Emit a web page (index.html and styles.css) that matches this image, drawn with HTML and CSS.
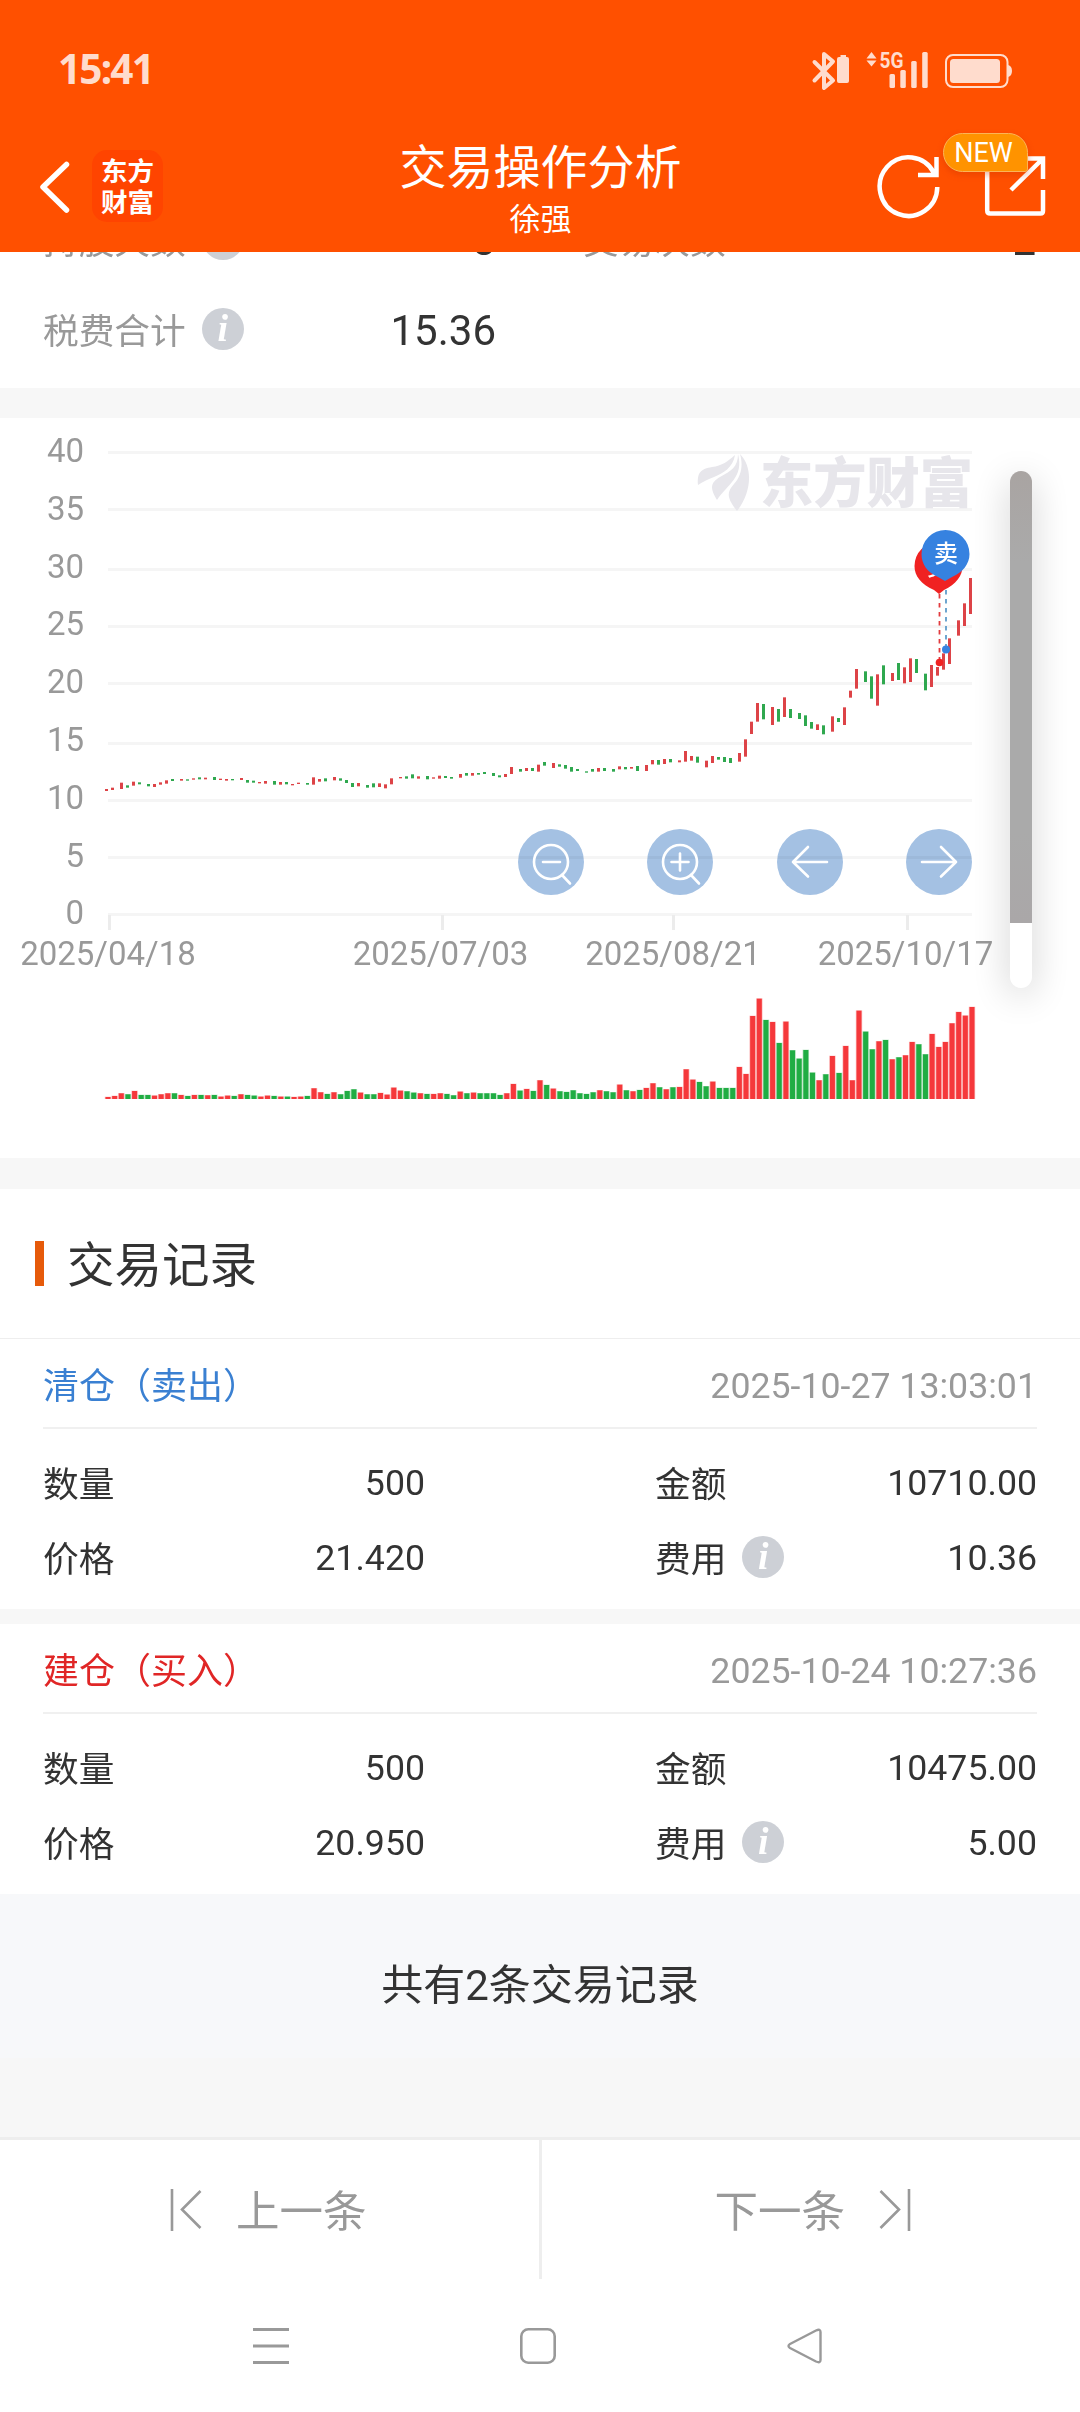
FILE: index.html
```html
<!DOCTYPE html>
<html lang="zh-CN">
<head>
<meta charset="utf-8">
<title>交易操作分析</title>
<link rel="stylesheet" href="styles.css">
</head>
<body>
<header class="top">
  <div class="status">
    <span class="clock">15:41</span>
    <svg class="status-icons" width="204" height="44" viewBox="810 48 204 44">
      <g fill="none" stroke="#ffdccd" stroke-width="4" stroke-linejoin="round" stroke-linecap="round">
        <path d="M814.5 62 833 80.500 824 88V54l9 7.500L814.500 80.500"/>
      </g>
      <g fill="#ffdccd">
        <path d="M840.500 57v-2h5.500v2h1a2 2 0 0 1 2 2v22a2 2 0 0 1-2 2h-8a2 2 0 0 1-2-2V59a2 2 0 0 1 2-2z"/>
        <path d="M866.500 58.500l5-6.500 5 6.500zM866.500 60.500h10l-5 6z"/>
        <text class="net" x="879.500" y="67.500" textLength="24" lengthAdjust="spacingAndGlyphs">5G</text>
        <rect x="889.500" y="74" width="5.500" height="14" rx="1.500"/>
        <rect x="900.300" y="70" width="5.500" height="18" rx="1.500"/>
        <rect x="911.200" y="61" width="5.500" height="27" rx="1.500"/>
        <rect x="922.200" y="52" width="5.500" height="36" rx="1.500"/>
        <rect x="950" y="59" width="50" height="24" rx="3.500"/>
        <path d="M1008 65q4 1 4 6t-4 6z"/>
      </g>
      <rect x="946" y="55" width="61.500" height="32" rx="7" fill="none" stroke="#ffdccd" stroke-width="2"/>
    </svg>
  </div>
  <div class="titlebar">
    <div class="left">
      <svg width="34" height="56" viewBox="38 159 34 56" fill="none" stroke="#fff" stroke-width="5.500" stroke-linecap="round" stroke-linejoin="round"><path d="M66.500 164.500 43 187l23.500 23"/></svg>
      <div class="brand"><span>东方</span><span>财富</span></div>
    </div>
    <div class="title"><h1>交易操作分析</h1><p>徐强</p></div>
    <div class="actions">
      <svg width="172" height="72" viewBox="876 148 172 72" fill="none" stroke="#fff" stroke-width="4.500">
        <path d="M937.300 187A28.800 29.300 0 1 1 934 173M936.500 157v18H918"/>
        <path d="M987.200 166v44.500q0 3 3 3h50.300q2.500 0 2.500-2.500v-21M1043 179v-20.500h-18M1042.500 159 1011 190"/>
      </svg>
      <span class="badge">NEW</span>
    </div>
  </div>
</header>

<main>
  <section class="summary">
    <div class="pair"><span class="name">持股天数</span><i class="info">i</i><b>3</b></div>
    <div class="pair"><span class="name">交易次数</span><b>2</b></div>
    <div class="pair"><span class="name">税费合计</span><i class="info">i</i><b>15.36</b></div>
  </section>

  <section class="chart">
    <svg width="1080" height="740" viewBox="0 418 1080 740">
      <g id="grid"></g>
      <g class="watermark">
        <path d="M698 485C697 472 701 469 712 467C722 466 728 461 735 455C733 468 723 473 714 477C707 480 702 482 698 485Z"/>
        <path d="M738 454C744 477 728 484 717 500C710 488 710 483 720 477C731 471 738 467 738 454Z"/>
        <path d="M740 454C753 467 752 492 737 511C726 497 727 492 734 484C742 475 743 464 740 454Z"/>
        <text x="760" y="502.500" textLength="213" lengthAdjust="spacingAndGlyphs">东方财富</text>
      </g>
      <g id="candles"></g>
      <g id="volume"></g>
      <g stroke-width="1.800" stroke-dasharray="4.500 4.500">
        <path d="M939.500 594v66" stroke="#e23b3e"/>
        <path d="M946 590v56" stroke="#5f9dcb"/>
      </g>
      <circle cx="939.500" cy="662.500" r="3.800" fill="#f02222"/>
      <circle cx="946" cy="649.500" r="4" fill="#3682e0"/>
      <path fill="#f02222" d="M939 594 934 590C921 584 914.500 576 914.500 566A24 24 0 0 1 962.500 566C962.500 576 956 584 944 590Z"/>
      <text class="mark" x="939" y="575">买</text>
      <path fill="#3682e0" d="M945 581 938 577C927 572 921.500 564 921.500 554A24 24 0 0 1 969.500 554C969.500 564 963 572 952 577Z"/>
      <text class="mark" x="946" y="562">卖</text>
      <g fill="#a4c1e3" style="mix-blend-mode:multiply">
        <circle cx="551" cy="862" r="33"/><circle cx="680" cy="862" r="33"/>
        <circle cx="810" cy="862" r="33"/><circle cx="939" cy="862" r="33"/>
      </g>
      <g fill="none" stroke="#fff" stroke-width="2.600" stroke-linecap="round" stroke-linejoin="round">
        <circle cx="551" cy="862" r="17"/><path d="M562 875l8 8.500M543 862h17"/>
        <circle cx="680" cy="862" r="17"/><path d="M691 875l8 8.500M671.500 862h17M680 853.500v17"/>
        <path d="M827 862h-34M808 847l-15 15 15 14.500"/>
        <path d="M922 862h34M941 847l15 15-15 14.500"/>
      </g>
    </svg>
    <div class="scroller"><div class="scroller-fill"></div></div>
  </section>

  <section class="records">
    <h2><span>交易记录</span></h2>
    <article class="record">
      <div class="head sell"><span>清仓（卖出）</span><time>2025-10-27 13:03:01</time></div>
      <div class="grid">
        <div class="cell"><span>数量</span><b>500</b></div><div class="cell"><span>金额</span><b>10710.00</b></div>
        <div class="cell"><span>价格</span><b>21.420</b></div><div class="cell"><span>费用</span><i class="info">i</i><b>10.36</b></div>
      </div>
    </article>
    <article class="record">
      <div class="head buy"><span>建仓（买入）</span><time>2025-10-24 10:27:36</time></div>
      <div class="grid">
        <div class="cell"><span>数量</span><b>500</b></div><div class="cell"><span>金额</span><b>10475.00</b></div>
        <div class="cell"><span>价格</span><b>20.950</b></div><div class="cell"><span>费用</span><i class="info">i</i><b>5.00</b></div>
      </div>
    </article>
  </section>
  <p class="total">共有2条交易记录</p>
</main>

<nav class="pager">
  <div class="prev">
    <svg width="34" height="46" viewBox="0 0 34 46" fill="none" stroke="#999" stroke-width="2.600"><path d="M3 2v42M31.500 4 13 22.500 31.500 41"/></svg>
    <span>上一条</span>
  </div>
  <div class="next">
    <span>下一条</span>
    <svg width="34" height="46" viewBox="0 0 34 46" fill="none" stroke="#999" stroke-width="2.600"><path d="M31 2v42M2.500 4 21 22.500 2.500 41"/></svg>
  </div>
</nav>
<footer class="sysnav">
  <svg width="36" height="40" viewBox="0 0 36 40" stroke="#999" stroke-width="2.800"><path d="M0 3.500h36M0 20h36M0 36.500h36"/></svg>
  <svg width="36" height="40" viewBox="0 0 36 40" fill="none" stroke="#999" stroke-width="2.600"><rect x="1.300" y="3.300" width="33.400" height="33.400" rx="7"/></svg>
  <svg width="36" height="40" viewBox="0 0 36 40" fill="none" stroke="#999" stroke-width="2.400" stroke-linejoin="round"><path d="M3 18 29 4.500Q33.500 2.500 33.500 6V34Q33.500 37.500 29 35.500L3 22Q0 20 3 18Z"/></svg>
</footer>
<script src="chart.js"></script>
</body>
</html>
```
FILE: styles.css
```css
* { box-sizing: border-box; }
body {
  margin: 0;
  width: 1080px;
  height: 2412px;
  overflow: hidden;
  background: #fff;
  color: #333;
  font-family: Roboto, "Noto Sans CJK SC", sans-serif;
  display: flex;
  flex-direction: column;
}
h1, h2, p { margin: 0; font-weight: 400; }
b { font-weight: 400; }
svg { display: block; flex: none; }

.top { height: 252px; flex: none; background: #ff5000; color: #fff; z-index: 1; }
.status {
  height: 140px;
  padding: 0 66px 0 58px;
  display: flex;
  align-items: center;
  justify-content: space-between;
}
.clock { font: 700 40.500px/44px "Noto Sans", Roboto, sans-serif; color: #ffdccd; letter-spacing: -1.8px; padding-bottom: 3px; }
.net { font: 700 22px Roboto, sans-serif; }
.titlebar {
  height: 112px;
  padding: 0 32px 0 38px;
  display: grid;
  grid-template-columns: 1fr auto 1fr;
}
.left { display: flex; align-items: flex-start; gap: 20px; padding-top: 10px; }
.left svg { margin-top: 9px; }
.brand {
  width: 71px;
  height: 72px;
  border-radius: 15px;
  background: #ff4400;
  display: flex;
  flex-direction: column;
  align-items: center;
  padding-top: 5px;
  font: 700 26.500px/30.500px "Noto Sans CJK SC", sans-serif;
}
.title { text-align: center; width: 300px; margin-left: -5px; }
.title h1 { font-size: 47px; line-height: 56px; white-space: nowrap; }
.title p { font-size: 31px; line-height: 36px; margin-top: 6px; }
.actions { position: relative; justify-self: end; padding-top: 8px; }
.badge {
  position: absolute;
  left: 67px;
  top: -7px;
  width: 85px;
  height: 39px;
  border: 1.500px solid #fbb457;
  border-radius: 20px 20px 3px 20px;
  background: #ff9300;
  box-shadow: 0 3px 6px rgba(200, 50, 0, .35);
  text-align: center;
  font-size: 27px;
  line-height: 38px;
  padding-right: 4px;
}

main { flex: 1; min-height: 0; background: #f7f7f7; display: flex; flex-direction: column; }
.summary {
  height: 136px;
  flex: none;
  overflow: hidden;
  background: #fff;
  padding: 0 43px;
  display: grid;
  grid-template-columns: 453px 453px;
  column-gap: 87px;
  grid-auto-rows: 90px;
  align-content: end;
  padding-bottom: 14px;
}
.pair { display: flex; align-items: center; }
.pair .name { font-size: 35.700px; color: #999; padding-bottom: 2px; }
.pair b { margin-left: auto; font-size: 42px; line-height: 42px; padding-top: 3px; }
.info {
  width: 42px;
  height: 42px;
  border-radius: 50%;
  background: #cdd0d6;
  color: #fff;
  text-align: center;
  font: italic 700 38px/40px "Liberation Serif", serif;
  margin-left: 16px;
}

.chart { position: relative; margin-top: 30px; height: 740px; flex: none; background: #fff; }
.chart text { font-family: Roboto, "Noto Sans CJK SC", sans-serif; font-size: 33px; fill: #999; }
.chart .watermark, .chart .watermark text { fill: #e7e6eb; }
.chart .watermark text { font: 900 54px "Noto Sans CJK SC", sans-serif; }
.chart .mark { font: 500 24px "Noto Sans CJK SC", sans-serif; fill: #fff; text-anchor: middle; }
.scroller {
  position: absolute;
  left: 1010px;
  top: 53px;
  width: 22px;
  height: 517px;
  border-radius: 11px;
  background: #fff;
  box-shadow: 0 8px 36px rgba(0, 0, 0, .2);
  overflow: hidden;
}
.scroller-fill { height: 452px; background: linear-gradient(#a9a4a2, #aaa 20%, #aaa 80%, #aaa7a8); }

.records { margin-top: 31px; flex: none; }
.records h2 {
  height: 149px;
  background: #fff;
  display: flex;
  align-items: center;
  gap: 23px;
  padding-left: 35px;
  font-size: 47.500px;
  line-height: 60px;
}
.records h2 span { padding-top: 4px; }
.records h2::before { content: ""; width: 9px; height: 45px; background: #e65a0a; }
.record { background: #fff; border-top: 1.500px solid #eee; height: 271px; padding: 0 43px; font-size: 35.700px; }
.record + .record { margin-top: 15px; border-top: 0; height: 270px; }
.head {
  height: 90px;
  border-bottom: 2px solid #f0f0f0;
  display: flex;
  align-items: center;
  justify-content: space-between;
}
.head span { font-size: 36px; }
.sell span { color: #3a80d2; }
.buy span { color: #e02626; }
.head time { color: #999; padding-top: 5px; }
.grid {
  display: grid;
  grid-template-columns: 382px 382px;
  justify-content: space-between;
  grid-auto-rows: 75px;
  padding-top: 15px;
}
.cell { display: flex; align-items: center; }
.cell b { margin-left: auto; padding-top: 3px; }
.total {
  height: 164px;
  flex: none;
  background: #f7f8fa;
  text-align: center;
  font-size: 42px;
  line-height: 183px;
}

.pager {
  height: 142px;
  flex: none;
  border-top: 3px solid #eee;
  display: grid;
  grid-template-columns: 542px 538px;
  color: #999;
  font-size: 43.500px;
}
.pager div { display: flex; align-items: center; gap: 33px; }
.pager span { padding-bottom: 2px; }
.prev { border-right: 3px solid #eee; padding-left: 169px; }
.next { justify-content: flex-end; padding-right: 168px; }
.sysnav { height: 133px; flex: none; display: flex; justify-content: center; gap: 231px; padding: 47px 5px 0 0; }
```
FILE: chart.js
```javascript
// Each candle: colour, then top and bottom in thirds of a pixel below y = 740.
const candleData = `r147,153 r143,150 r128,147 g136,143 r125,137 g127,133 g132,139 r132,141 r127,134 r121,131
g117,123 r117,122 g118,122 r115,119 g112,118 r113,118 g111,120 r116,120 r117,122 g117,121
r114,120 g120,128 g122,128 r126,130 r123,131 g123,134 r126,134 g126,133 r132,136 r128,132
g129,134 r112,134 r117,125 g115,124 r111,121 g115,122 g120,129 g129,141 r129,139 g135,143
g130,142 r130,141 r133,145 r115,133 r111,115 g109,116 g103,115 r109,116 g108,118 r112,116
r107,116 g108,114 g111,116 r102,113 g99,107 r99,107 g99,104 g96,102 g99,108 g106,112
r102,111 r81,102 g87,95 r84,93 g84,93 r74,95 g66,77 r69,84 g73,80 g75,86
g81,95 g87,93 g94,98 g87,95 r84,95 g84,93 g87,95 r79,88 g81,88 r81,86
g78,93 r75,93 r60,73 g60,74 r57,72 g57,67 r61,67 r33,65 r48,62 g50,68
r62,82 r48,69 g51,59 g51,66 g54,69 r39,65 r-2,50 r-55,-18 r-111,-55 g-108,-62
r-99,-45 g-93,-55 r-128,-69 g-93,-66 g-81,-63 g-74,-42 g-54,-34 r-47,-30 g-44,-17 r-71,-25
g-66,-54 r-98,-45 r-148,-127 r-213,-154 g-206,-174 g-191,-124 r-197,-103 g-224,-167 r-201,-177 g-231,-180
r-218,-170 r-245,-174 g-243,-201 g-199,-149 r-225,-159 r-219,-193 r-260,-211 r-305,-228 r-359,-313 r-410,-342
r-486,-378`.split(/\s+/);

// Each volume bar: colour, then height in thirds of a pixel.
const volumeData = `r6 r9 r17 g14 r24 g12 g12 r10 r14 r17 g17 r12 g9 r12 g12 r11 g12 r7 r10 g9
r14 g12 g10 r7 r10 g9 r7 g7 r6 r7 g9 r32 r20 g15 r20 g14 g24 g29 r19 g14
g14 r18 r13 r34 r25 g23 g19 r17 g15 r15 r17 g15 g11 r22 g17 r19 g17 g17 g17 g12
r17 r45 g25 r30 g24 r56 g42 r31 g23 g21 g26 g17 g15 g20 r26 g23 g20 r43 g26 r23
g27 r33 r47 g35 r29 g35 r36 r89 r58 g51 g38 r52 g33 g33 g33 r96 r75 r249 r301 g237
r231 g168 r232 g146 g121 g147 g79 r56 g74 r129 g78 r159 r56 r265 g202 g149 r173 g177 r119 g125
r131 r171 g164 g134 r195 r156 r171 r227 r261 r250 r276`.split(/\s+/);

const NS = "http://www.w3.org/2000/svg";
function add(parent, tag, attrs, text) {
  const el = document.createElementNS(NS, tag);
  for (const k in attrs) el.setAttribute(k, attrs[k]);
  if (text) el.textContent = text;
  document.getElementById(parent).appendChild(el);
}

[452, 509, 569, 626, 683, 743, 800, 857, 914].forEach((y, i) => {
  add("grid", "rect", { x: 108, y: y - 1, width: 864, height: 3, fill: "#f5f5f5" });
  add("grid", "text", { x: 84, y: 462 + i * 57.8, "text-anchor": "end" }, String(40 - i * 5));
});
[["2025/04/18", 108, 108], ["2025/07/03", 440.5, 441], ["2025/08/21", 673, 672], ["2025/10/17", 905.5, 906]].forEach(([label, cx, tick]) => {
  add("grid", "rect", { x: tick, y: 915, width: 3, height: 15, fill: "#ececec" });
  add("grid", "text", { x: cx, y: 965, "text-anchor": "middle" }, label);
});

candleData.forEach((d, i) => {
  const [t, b] = d.slice(1).split(",").map(Number);
  add("candles", "rect", {
    x: 3 * Math.floor(35.77 + i * 2.214), y: 740 + t / 3, width: 3, height: (b - t) / 3,
    fill: d[0] === "r" ? "#dd4347" : "#2fa84f"
  });
});

volumeData.forEach((d, i) => {
  const h = d.slice(1) / 3, cx = 108 + i * 6.646, fill = d[0] === "r" ? "#f5383b" : "#20ad43";
  add("volume", "rect", { x: cx - 3.2, y: 1098.7 - h, width: 6.4, height: h + 0.3, fill, opacity: 0.35 });
  add("volume", "rect", { x: cx - 2.5, y: 1099 - h, width: 5, height: h, fill });
});
```
